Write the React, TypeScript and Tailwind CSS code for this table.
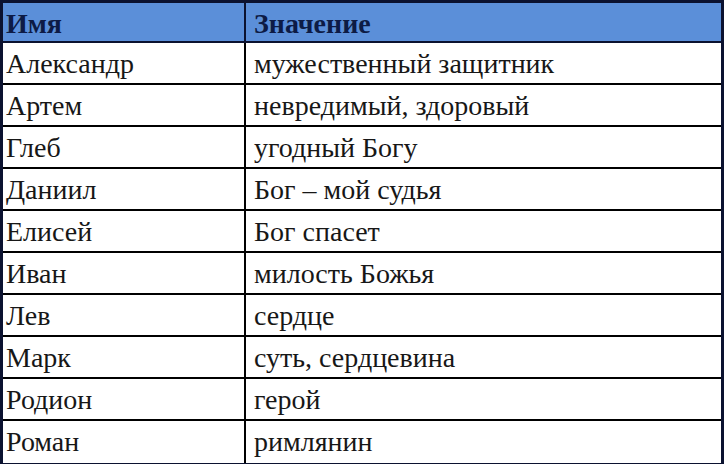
const names = ["Александр", "Артем", "Глеб", "Даниил", "Елисей", "Иван", "Лев", "Марк", "Родион", "Роман"];
const meanings = [
  "мужественный защитник",
  "невредимый, здоровый",
  "угодный Богу",
  "Бог – мой судья",
  "Бог спасет",
  "милость Божья",
  "сердце",
  "суть, сердцевина",
  "герой",
  "римлянин",
];

export default function App() {
  return (
    <div className="w-[724px] h-[464px] overflow-hidden bg-white">
      <div className="border-[3px] border-[#0b1230] text-[28px] text-neutral-900">
        {/* Header */}
        <div className="grid grid-cols-[243px_1fr] h-[40px] bg-[#5b8fd9] border-b-2 border-[#0b1230] text-[#0d1b45]">
          <div className="flex items-center px-[3px] border-r-2 border-[#0b1230]">
            <span className="font-['Liberation_Serif'] font-bold">Имя</span>
          </div>
          <div className="flex items-center px-[8px]">
            <span className="font-['Liberation_Serif'] font-bold">Значение</span>
          </div>
        </div>
        {names.map((name, i) => (
          <div key={name} className="grid grid-cols-[243px_1fr] h-[42px] border-b-2 border-black last:border-b-0">
            <div className="flex items-center px-[3px] border-r-2 border-black">
              <span className="font-['Liberation_Serif']">{name}</span>
            </div>
            <div className="flex items-center px-[8px]">
              <span className="font-['Liberation_Serif']">{meanings[i]}</span>
            </div>
          </div>
        ))}
      </div>
    </div>
  );
}
